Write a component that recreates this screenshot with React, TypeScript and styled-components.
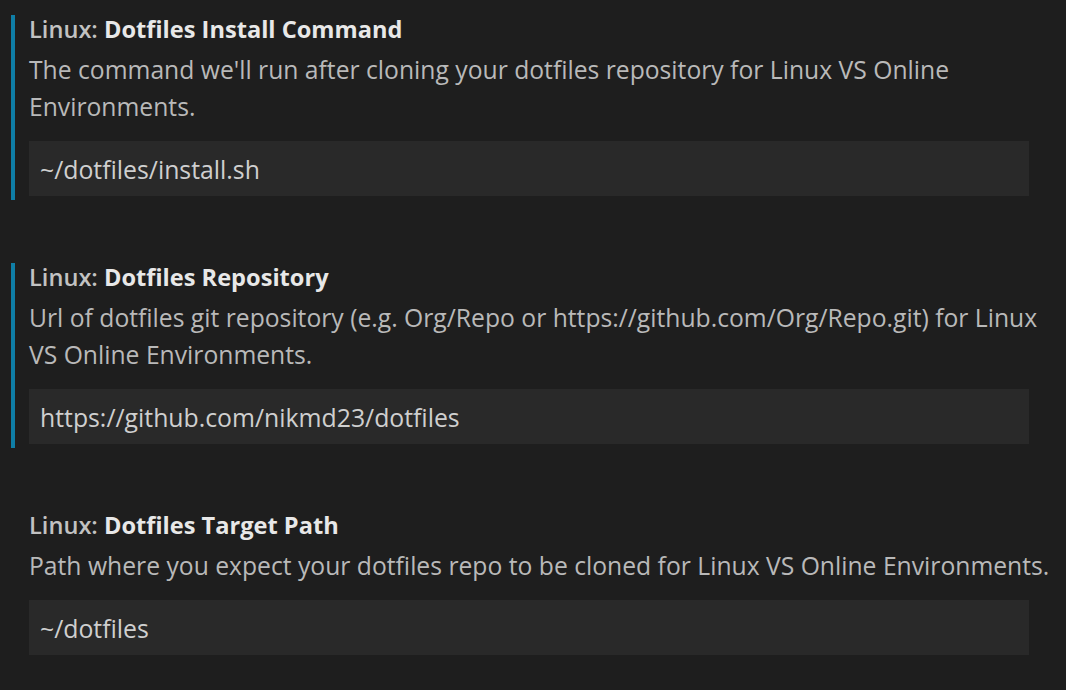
import React from 'react'
import styled, { createGlobalStyle } from 'styled-components'

const colors = {
  bg: '#1e1e1e',
  input: '#292929',
  focus: '#0f7ea6',
  label: '#c2c2c2',
  title: '#e8e8e8',
  desc: '#b9b9b9',
  value: '#cfcfcf',
}

interface Setting {
  category: string
  title: string
  description: string
  value: string
  focused?: boolean
}

const settings: Setting[] = [
  {
    category: 'Linux: ',
    title: 'Dotfiles Install Command',
    description: "The command we'll run after cloning your dotfiles repository for Linux VS Online Environments.",
    value: '~/dotfiles/install.sh',
    focused: true,
  },
  {
    category: 'Linux: ',
    title: 'Dotfiles Repository',
    description:
      'Url of dotfiles git repository (e.g. Org/Repo or https://github.com/Org/Repo.git) for Linux VS Online Environments.',
    value: 'https://github.com/nikmd23/dotfiles',
    focused: true,
  },
  {
    category: 'Linux: ',
    title: 'Dotfiles Target Path',
    description: 'Path where you expect your dotfiles repo to be cloned for Linux VS Online Environments.',
    value: '~/dotfiles',
  },
]

const App = () => {
  return (
    <>
      <GlobalStyle />
      <Page>
        {settings.map((s) => (
          <SettingItem key={s.title} focused={!!s.focused}>
            <Title>
              <Category>{s.category}</Category>
              {s.title}
            </Title>
            <Description>{s.description}</Description>
            <ValueInput defaultValue={s.value} spellCheck={false} />
          </SettingItem>
        ))}
      </Page>
    </>
  )
}

export default App

const GlobalStyle = createGlobalStyle`
  html, body {
    margin: 0;
    padding: 0;
    background: ${colors.bg};
  }
  body {
    font-family: 'Open Sans', 'Noto Sans', sans-serif;
  }
`

const Page = styled.div`
  display: flex;
  flex-direction: column;
  gap: 63px;
  padding: 15px 37px 0px 11px;
  width: 1066px;
  height: 690px;
  box-sizing: border-box;
  overflow: hidden;
`

const SettingItem = styled.div<{ focused: boolean }>`
  display: flex;
  flex-direction: column;
  border-left: 4px solid ${(props) => (props.focused ? colors.focus : 'transparent')};
  padding: 0px 0px 4px 14px;
`

const Title = styled.div`
  color: ${colors.title};
  font-size: 23.6px;
  font-weight: 700;
  line-height: 28px;
  white-space: nowrap;
`

const Category = styled.span`
  color: ${colors.label};
  font-weight: 600;
`

const Description = styled.div`
  margin-top: 8px;
  margin-right: -40px;
  color: ${colors.desc};
  font-size: 24.7px;
  line-height: 37px;
`

const ValueInput = styled.input`
  margin-top: 16px;
  height: 55px;
  box-sizing: border-box;
  padding: 0px 11px;
  border: none;
  outline: none;
  background: ${colors.input};
  color: ${colors.value};
  font-family: 'Open Sans', 'Noto Sans', sans-serif;
  font-size: 24.8px;
`
